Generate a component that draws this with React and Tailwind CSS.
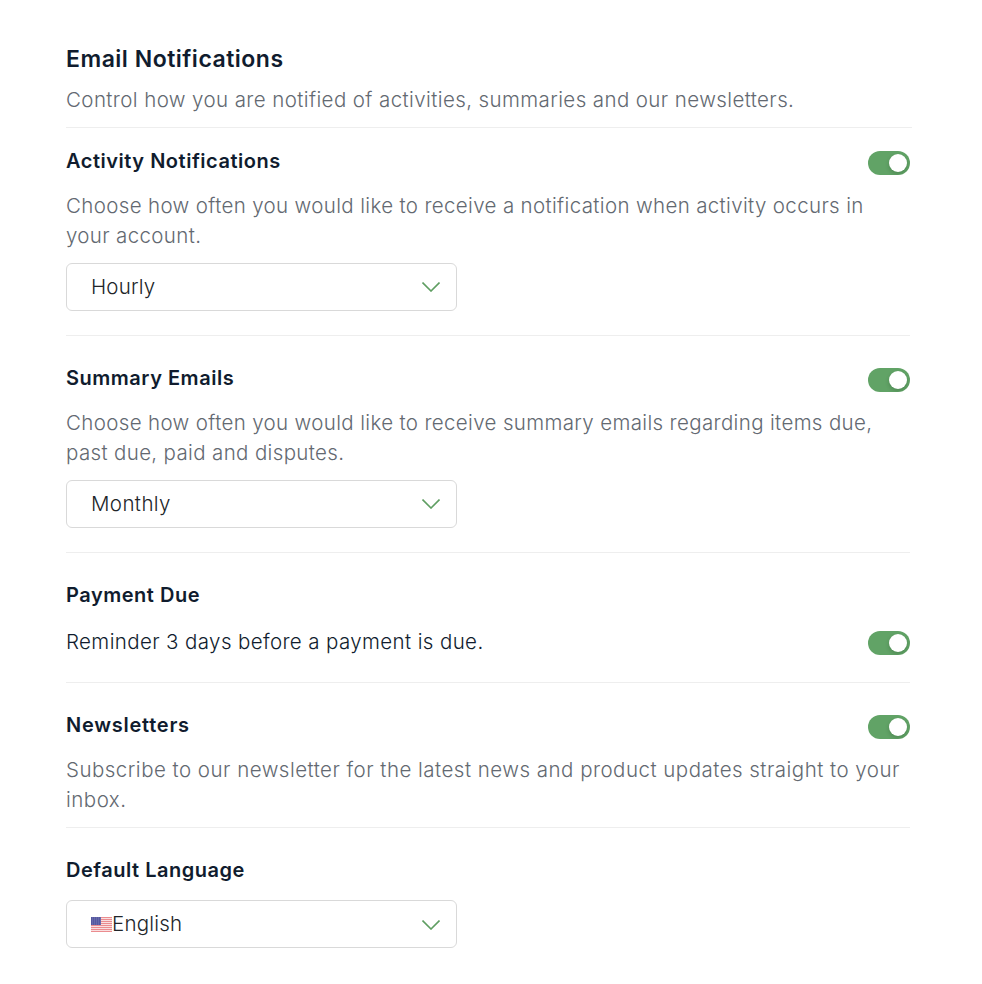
import React, { useState } from 'react';

const Toggle = ({ defaultOn = true, className = '' }) => {
  const [on, setOn] = useState(defaultOn);

  return (
    <button
      type="button"
      role="switch"
      aria-checked={on}
      onClick={() => setOn(!on)}
      className={`flex h-6 w-[42px] shrink-0 items-center overflow-hidden rounded-full px-[3px] ${on ? 'justify-end bg-[#61a366]' : 'justify-start bg-gray-300'} ${className}`}
    >
      <span className="size-[18px] rounded-full bg-white shadow-[0_2px_4px_rgba(0,35,11,0.2)]" />
    </button>
  );
};

const Flag = () => (
  <svg width="21" height="15" viewBox="0 0 21 15" className="mb-px">
    <rect width="21" height="15" fill="#f9dfe0" />
    {[0, 2, 4, 6, 8, 10, 12, 14].map((y) => (
      <rect key={y} y={y} width="21" height="1" fill="#eb8c8f" />
    ))}
    <rect width="10" height="8" fill="#5558a0" />
    {[1, 3, 5, 7].map((y) => (
      <path key={y} d={`M1 ${y}h9`} stroke="#8a8cbf" strokeWidth="0.7" strokeDasharray="1 1" />
    ))}
  </svg>
);

const Select = ({ value, icon, className = '', textClass = 'tracking-[0.2px]' }) => (
  <button
    type="button"
    className={`flex h-12 w-[391px] items-center rounded-[6px] border border-[#d9d9d9] pl-6 pr-4 ${className}`}
  >
    {icon}
    <span className={`text-[20.5px] font-[330] text-[#212529] ${textClass}`}>{value}</span>
    <svg width="18" height="10" viewBox="0 0 18 10" fill="none" className="ml-auto">
      <path d="M0.5 0.5L9 9l8.5-8.5" stroke="#5f9e62" strokeWidth="1.6" />
    </svg>
  </button>
);

const Title = ({ children, className = 'tracking-[0.52px]' }) => (
  <h2 className={`text-[20px] leading-[30px] font-[580] text-[#101c2e] ${className}`}>{children}</h2>
);

const Description = ({ lines, className = 'tracking-[0.35px]' }) => (
  <p className={`mt-[15px] text-[20.5px] leading-[30px] font-[330] whitespace-nowrap text-[#636971] ${className}`}>
    {lines.map((line) => (
      <span key={line} className="block">{line}</span>
    ))}
  </p>
);

const App = () => (
  <main className="h-[984px] overflow-hidden bg-white pt-[43px] pl-[66px] font-['Inter',sans-serif]">
    <header className="h-[85px] w-[846px] border-b border-[#eeeeee]">
      <h1 className="text-[23px] leading-8 font-[580] tracking-[0.5px] text-[#101c2e]">Email Notifications</h1>
      <p className="mt-[10px] text-[20.5px] leading-[30px] font-[330] tracking-[0.4px] whitespace-nowrap text-[#636971]">
        Control how you are notified of activities, summaries and our newsletters.
      </p>
    </header>

    <div className="w-[844px]">
      <section className="h-[208px] border-b border-[#eeeeee] pt-[18px]">
        <div className="flex justify-between">
          <Title>Activity Notifications</Title>
          <Toggle className="mt-[5px]" />
        </div>
        <Description
          lines={[
            'Choose how often you would like to receive a notification when activity occurs in',
            'your account.',
          ]}
        />
        <Select value="Hourly" className="mt-3" />
      </section>

      <section className="h-[217px] border-b border-[#eeeeee] pt-[27px]">
        <div className="flex justify-between">
          <Title>Summary Emails</Title>
          <Toggle className="mt-[5px]" />
        </div>
        <Description
          lines={[
            'Choose how often you would like to receive summary emails regarding items due,',
            'past due, paid and disputes.',
          ]}
        />
        <Select value="Monthly" className="mt-3" textClass="tracking-[0.4px]" />
      </section>

      <section className="h-[130px] border-b border-[#eeeeee] pt-[27px]">
        <Title>Payment Due</Title>
        <div className="mt-[17px] flex justify-between">
          <p className="text-[20.5px] leading-[30px] font-[330] tracking-[0.38px] text-[#101c2e]">
            Reminder 3 days before a payment is due.
          </p>
          <Toggle className="mt-1" />
        </div>
      </section>

      <section className="h-[145px] border-b border-[#eeeeee] pt-[27px]">
        <div className="flex justify-between">
          <Title className="tracking-[0.75px]">Newsletters</Title>
          <Toggle className="mt-[5px]" />
        </div>
        <Description
          className="tracking-[0.48px]"
          lines={[
            'Subscribe to our newsletter for the latest news and product updates straight to your',
            'inbox.',
          ]}
        />
      </section>

      <section className="pt-[27px]">
        <Title>Default Language</Title>
        <Select value="English" icon={<Flag />} className="mt-[15px] pt-px" />
      </section>
    </div>
  </main>
);

export default App;
